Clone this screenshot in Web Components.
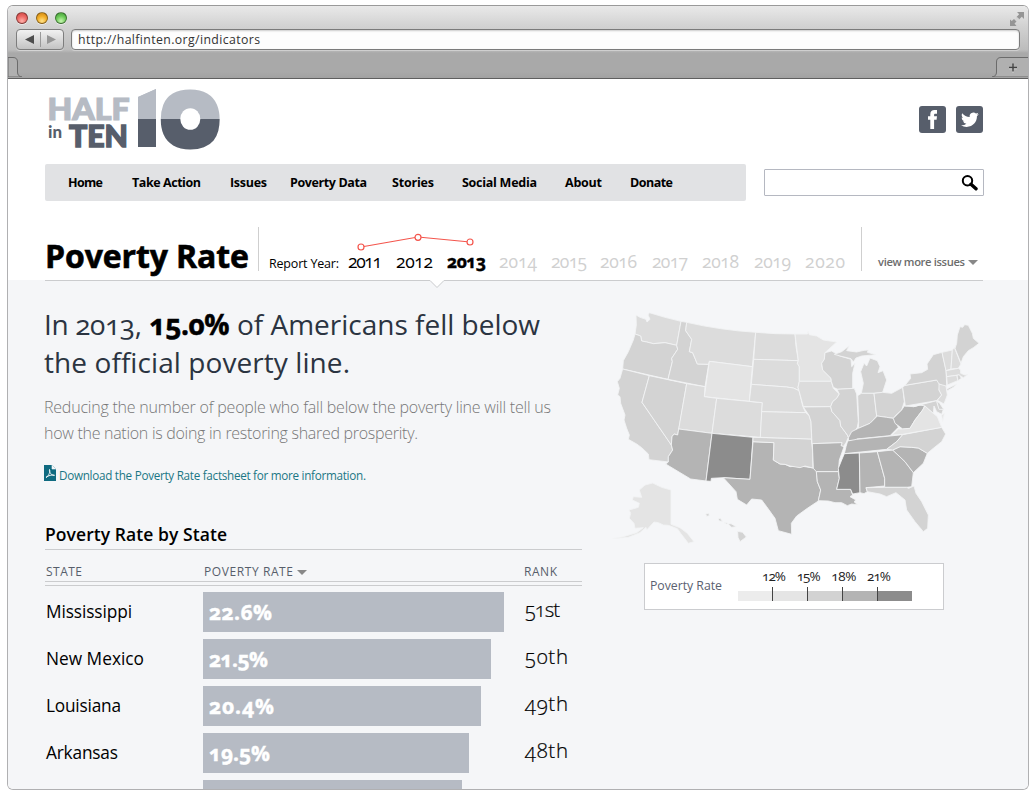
<!DOCTYPE html>
<html lang="en">
<head>
<meta charset="utf-8">
<title>Half in Ten – Indicators</title>
<style>
html,body{margin:0;height:790px;overflow:hidden;background:#fff}
body{font-family:"Open Sans","Noto Sans",sans-serif;color:#000}
</style>
</head>
<body>
<browser-window>
  <site-header></site-header>
  <site-nav></site-nav>
  <issue-bar></issue-bar>
  <issue-report></issue-report>
</browser-window>

<script>
const pending = [];
class Shadowed extends HTMLElement {
  constructor() {
    super();
    const t = document.createElement('template');
    t.innerHTML = this.constructor.markup;
    this.attachShadow({mode: 'open'}).append(t.content.cloneNode(true));
  }
}
const define = (name, markup) =>
  customElements.define(name, class extends Shadowed { static get markup() { return markup; } });

/* A single line of text tracked to a fixed measure (attribute w, in px). */
customElements.define('fit-text', class extends Shadowed {
  static get markup() { return '<style>:host{display:block;white-space:pre;flex:none}span{display:inline-block}</style><span><slot></slot></span>'; }
  connectedCallback() { pending.push(this); }
  fit() {
    const w = +this.getAttribute('w'), s = this.shadowRoot.querySelector('span');
    if (!w) return;
    const natural = s.getBoundingClientRect().width, n = this.textContent.length - 1;
    s.style.letterSpacing = ((w - natural) / n) + 'px';
    this.style.width = w + 'px';
  }
});

define('browser-window', `<style>
:host{display:block;box-sizing:border-box;width:1022px;height:785px;margin:5px 0 0 7px;border:1px solid #b0b0b2;border-top-color:#9a9a9a;border-radius:6px;overflow:hidden;background:#fff}
.chrome{height:73px;box-sizing:border-box;border-bottom:1px solid #5f5f5f;background:linear-gradient(#e9e9e9 0,#d2d2d2 20px,#bcbcbc 44px,#a9a9a9 47px,#a9a9a9 66px,#a2a2a2 72px);display:flex;flex-direction:column}
.lights{height:23px;display:flex;align-items:center;padding:0 5px 0 8px}
.lights i{width:10px;height:10px;border-radius:50%;border:1px solid #0006;margin-right:7.5px;box-shadow:0 1px 0 #fff8}
.r{background:radial-gradient(circle at 50% 80%,#ffb1ab,#ed6a66 50%,#c94340)}
.y{background:radial-gradient(circle at 50% 80%,#ffe38a,#f2ae28 50%,#c98211)}
.g{background:radial-gradient(circle at 50% 80%,#c8f7b1,#6ecb5a 50%,#3f9534)}
.lights svg{margin-left:auto;margin-right:-2px}
.bar{display:flex;height:21px;gap:7px;padding:0 8px 0 8px}
.btn{width:48px;box-sizing:border-box;border:1px solid #7d7d7d;border-radius:4px;background:linear-gradient(#f2f2f2,#c3c3c3);box-shadow:0 1px 0 #d5d5d5}
.url{flex:1;box-sizing:border-box;border:1px solid #7b7b7b;border-radius:4px;background:#fdfdfd;box-shadow:inset 0 1px 2px #0003,0 1px 0 #cfcfcf;padding-left:6px;font-size:12.300px;line-height:19px;color:#333}
.tabs{display:flex;justify-content:space-between;height:20px;margin-top:7px}
</style>
<div class="chrome">
 <div class="lights"><i class="r"></i><i class="y"></i><i class="g"></i>
  <svg width="16" height="16" viewBox="0 0 16 16"><path d="M8 2h7v7l-2.200-2.200L10 9.500 7.500 7l2.700-2.800zM1 9.500l1.800 1.500L5 9l2.500 2.500L5.500 13.500 7.500 16H1z" fill="#959595"/><path d="M5 12.500l6-6.500" stroke="#d4d4d4" stroke-width="3" stroke-dasharray="0 3 3 9"/></svg></div>
 <div class="bar"><div class="btn"><svg width="46" height="19" viewBox="0 0 46 19"><path d="M8 9.500l9-4.500v9z" fill="#4d4d4d"/><path d="M23.500 2v15" stroke="#999"/><path d="M39 9.500l-9-4.500v9z" fill="#969696"/></svg></div>
 <div class="url"><fit-text w="182">http://halfinten.org/indicators</fit-text></div></div>
 <div class="tabs">
  <svg width="16" height="20" viewBox="0 0 16 20"><path d="M0 .5H5Q9.500 .5 9.500 5V15Q9.500 19.500 14 20H0z" fill="#b0b0b0" stroke="#6b6b6b"/></svg>
  <svg width="36" height="20" viewBox="0 0 36 20"><path d="M37 .5H9Q4.500 .5 4.500 5V15Q4.500 19.500 0 20H37z" fill="#b0b0b0" stroke="#6b6b6b"/><path d="M17 11.500h8M21 7.500v8" stroke="#d8d8d8" stroke-width="1.500"/><path d="M17 10.500h8M21 6.500v8" stroke="#444" stroke-width="1.500"/></svg></div>
</div>
<slot></slot>`);

define('half-in-ten-logo', `<style>:host{display:block}svg{display:block;overflow:visible}text{font-family:Lato,"Open Sans",sans-serif;font-weight:900}</style>
<svg width="176" height="64" viewBox="0 0 176 64">
 <defs><linearGradient id="two" gradientUnits="userSpaceOnUse" x1="0" y1="0" x2="0" y2="64"><stop offset=".5" stop-color="#b6bbc4"/><stop offset=".5" stop-color="#575e6b"/></linearGradient>
 <clipPath id="one"><path d="M93 10L111 2V60H93z"/></clipPath></defs>
 <text x="2.500" y="32.500" font-size="29.500" textLength="82" lengthAdjust="spacingAndGlyphs" fill="#b6bbc4" stroke="#b6bbc4" stroke-width="1.200">HALF</text>
 <text x="3" y="51" font-size="16.500" textLength="14" lengthAdjust="spacingAndGlyphs" fill="#575e6b">in</text>
 <text x="24" y="59.500" font-size="29.500" textLength="59" lengthAdjust="spacingAndGlyphs" fill="#575e6b" stroke="#575e6b" stroke-width="1.400">TEN</text>
 <g clip-path="url(#one)"><text x="78" y="60" style="font-family:'Open Sans';font-weight:800" font-size="81" fill="url(#two)" stroke="url(#two)" stroke-width="14">1</text></g>
 <text transform="translate(120.400 0) scale(1.150 1)" x="0" y="55.500" textLength="43" lengthAdjust="spacingAndGlyphs" style="font-family:'Open Sans';font-weight:800" font-size="66" fill="url(#two)" stroke="url(#two)" stroke-width="12" stroke-linejoin="round">0</text>
 <ellipse cx="145.300" cy="32" rx="10" ry="10.800" fill="#fff"/>
</svg>`);

define('site-header', `<style>
:host{display:flex;justify-content:space-between;height:85px;box-sizing:border-box;padding:8px 45px 0 37px}
.social{display:flex;gap:10px;padding-top:19px}.social svg{display:block}
</style><half-in-ten-logo></half-in-ten-logo>
<div class="social">
<svg width="27" height="27" viewBox="0 0 27 27"><rect width="27" height="27" rx="3" fill="#575e6b"/><path d="M11.300 23V13.800H9V10.200h2.300V8.200C11.300 5.300 13 4 15.500 4H18v3.700h-1.600c-1 0-1.300.4-1.300 1.200v1.300H18l-.4 3.600h-2.500V23z" fill="#fff"/></svg>
<svg width="27" height="27" viewBox="0 0 27 27"><rect width="27" height="27" rx="3" fill="#575e6b"/><path transform="translate(5 4.800) scale(.74)" d="M23.950 4.570a10 10 0 01-2.820.77 4.960 4.960 0 002.160-2.720c-.95.550-2 .95-3.120 1.180a4.920 4.920 0 00-8.380 4.480C7.690 8.100 4.070 6.130 1.640 3.160a4.820 4.820 0 00-.67 2.480c0 1.710.87 3.210 2.190 4.100a4.900 4.900 0 01-2.230-.62v.060a4.920 4.920 0 003.950 4.830 5 5 0 01-2.210.080 4.940 4.940 0 004.600 3.420A9.870 9.870 0 010 19.540a14 14 0 007.550 2.210c9.050 0 14-7.500 14-13.980 0-.21 0-.420-.020-.63a9.940 9.940 0 002.460-2.550z" fill="#fff"/></svg>
</div>`);

define('site-nav', `<style>
:host{display:flex;gap:18px;margin-left:37px;align-items:center;height:37px}
nav{box-sizing:border-box;width:701px;height:37px;background:#e1e2e4;border-radius:2px;display:flex;padding-left:23px;font-size:12.500px;font-weight:700;line-height:37px}
.search{box-sizing:border-box;width:220px;height:27px;border:1px solid #b5b8c1;border-radius:1px;display:flex;justify-content:flex-end;padding:4px 5px}
</style><nav><fit-text w="35">Home</fit-text><fit-text w="69" style="margin-left:29px">Take Action</fit-text><fit-text w="37" style="margin-left:29px">Issues</fit-text><fit-text w="77" style="margin-left:23px">Poverty Data</fit-text><fit-text w="42" style="margin-left:25px">Stories</fit-text><fit-text w="75" style="margin-left:28px">Social Media</fit-text><fit-text w="37" style="margin-left:28px">About</fit-text><fit-text w="43" style="margin-left:28px">Donate</fit-text></nav>
<div class="search"><svg width="17" height="17" viewBox="0 0 17 17"><circle cx="6.500" cy="6.700" r="4.700" fill="none" stroke="#000" stroke-width="2"/><path d="M10 10.200l5 4.600" stroke="#000" stroke-width="3.400" stroke-linecap="round"/></svg></div>`);

define('year-trend', `<style>:host{display:block}svg{display:block}</style>
<svg width="130" height="20" viewBox="0 0 130 20" fill="#fff" stroke="#f4554c" stroke-width="1.200"><path d="M15 15L72 5L124 10" fill="none"/><circle cx="15" cy="15" r="3"/><circle cx="72" cy="5.300" r="3"/><circle cx="124" cy="10" r="3"/></svg>`);

define('issue-bar', `<style>
:host{display:flex;height:79px;margin:0 45px 0 37px}
h1{margin:35px 0 0;font-size:32px;line-height:40px;font-weight:700;width:213px;-webkit-text-stroke:.6px #000}
.mid{box-sizing:border-box;width:604px;height:44px;margin-top:26px;border:solid #cfcfcf;border-width:0 1px;padding-left:10px}
year-trend{height:20px;margin:5px 0 0 77px}
.years{display:flex;line-height:24px;margin-top:-3px;color:#d0d0d0;font-size:17.500px;font-variant-numeric:oldstyle-nums}
.label{font-size:12.500px;line-height:29px;color:#000;margin-right:9px}
.on{color:#000}.now{color:#000;font-weight:700;-webkit-text-stroke:.4px #000}
.more{display:flex;gap:3px;margin:51px 0 0 16px;height:20px;line-height:20px;font-size:11.200px;font-weight:600;color:#6c6c6c}
i{border:5px solid transparent;border-top:5px solid #888;border-bottom:0;height:0;margin-top:8px}
</style><h1><fit-text w="204">Poverty Rate</fit-text></h1>
<div class="mid"><year-trend></year-trend><div class="years"><fit-text class="label" w="70">Report Year:</fit-text><fit-text class="on" w="34">2011</fit-text><fit-text class="on" w="37" style="margin-left:14px">2012</fit-text><fit-text class="now" w="39" style="margin-left:14px">2013</fit-text><fit-text w="38" style="margin-left:13px">2014</fit-text><fit-text w="36" style="margin-left:14px">2015</fit-text><fit-text w="37" style="margin-left:13px">2016</fit-text><fit-text w="36" style="margin-left:15px">2017</fit-text><fit-text w="37" style="margin-left:14px">2018</fit-text><fit-text w="37" style="margin-left:15px">2019</fit-text><fit-text w="40" style="margin-left:14px">2020</fit-text></div></div>
<div class="more"><fit-text w="87">view more issues</fit-text><i></i></div>`);

define('us-map', `<style>:host{display:block}svg{display:block}path{stroke:#f2f3f4;stroke-width:2.600;stroke-linejoin:round}.a{fill:#e4e4e4}.b{fill:#dcdcdc}.c{fill:#d3d3d3}.d{fill:#b4b4b4}.e{fill:#8c8c8c}</style>
<svg width="400" height="250" viewBox="0 0 1200 750">
<path class="b" d="M108 45L120 52 138 58 141 66 150 58 144 45 148 38 195 52 243 64 230 136 195 128 160 131 140 126 125 123 122 108 105 102 109 75z"/>
<path class="c" d="M105 102L122 108 125 123 140 126 160 131 195 128 230 136 233 148 215 175 217 185 204 238 68 207 70 182 85 155 100 120z"/>
<path class="c" d="M68 207L148 227 126 307 214 435 218 450 205 470 205 486 147 479 145 462 125 443 110 432 85 418 88 405 80 385 72 360 75 345 62 310 60 290 53 285 58 265 52 245 60 235z"/>
<path class="c" d="M148 227L260 251 237 385 233 405 222 402 216 410 214 435 126 307z"/>
<path class="c" d="M243 64L260 67 257 92 275 118 268 155 278 158 292 192 326 193 315 260 204 238 217 185 215 175 233 148 230 136z"/>
<path class="b" d="M260 67Q360 90 467 97L457 200 328 184 326 193 292 192 278 158 268 155 275 118 257 92z"/>
<path class="a" d="M328 184L457 200 448 304 313 290z"/>
<path class="b" d="M260 251L315 260 313 290 350 295 336 400 236 387z"/>
<path class="b" d="M350 295L487 308 481 412 336 400z"/>
<path class="d" d="M236 387L336 400 318 543 272 537 197 492 205 486 205 470 218 450 214 435 216 410 222 402 233 405z"/>
<path class="e" d="M336 400L459 412 450 538 370 533 334 535 333 544 318 543z"/>
<path class="d" d="M459 425L522 428 520 480 540 492 555 493 570 500 600 498 615 500 640 504 649 513 652 545 662 570 655 603 622 625 590 648 574 670 575 703 535 692 525 655 500 620 485 600 455 597 440 615 412 598 408 575 370 533 450 538z"/>
<path class="c" d="M459 412L634 417 638 455 639 504 615 498 600 503 570 498 555 493 540 492 520 480 522 428 459 425z"/>
<g transform="translate(420)">
<path class="b" d="M47 97L105 101 165 102 168 140 175 182 41 178z"/>
<path class="b" d="M41 178L175 182 172 190 178 200V245L174 262 177 272 160 264 140 261 34 253z"/>
<path class="b" d="M34 253L140 261 160 264 177 272 188 318 197 338 65 335 67 308 28 304z"/>
<path class="b" d="M65 335L197 338 207 346 213 365 215 417 61 412z"/>
<path class="a" d="M165 102L203 102 204 94 208 104 230 108 250 120 290 126 255 158 253 178 245 190 248 210 273 235 274 244H178V200L172 190 175 182z"/>
<path class="b" d="M178 244H274L280 265 298 282 290 295 278 305 272 320H190L177 272 174 262z"/>
<path class="c" d="M190 321L272 320 276 335 300 362 302 378 322 405 325 412 318 428 310 440 303 437 306 428 216 431 213 365 207 346z"/>
<path class="d" d="M217 431L306 428 303 437 312 440 298 480 295 515H229L220 505z"/>
<path class="d" d="M229 515H295L298 535 290 568H332L338 585 330 590 348 600 342 605 352 614 335 612 322 617 305 608 285 608 265 603 235 602 242 570 232 545z"/>
<path class="c" d="M255 158L275 153 300 168 333 178 335 200 345 190 338 220V265L293 268 280 262 274 244 273 235 248 210 245 190 253 178z"/>
<path class="c" d="M291 268L343 265 350 282 355 365 352 382 340 400 325 412 322 405 302 378 300 362 276 335 272 320 278 305 290 295 298 282z"/>
</g>
<g transform="translate(570)">
<path class="c" d="M133 163L155 155 178 137 170 152 200 156 222 151 235 150 232 157 258 164 215 168 198 174 190 186 183 176 150 168z"/>
<path class="c" d="M214 280L220 250 212 215 222 190 230 198 240 174 262 182 270 200 264 218 279 212 290 240 278 277 252 280z"/>
<path class="c" d="M203 287L214 280 252 280 260 348 240 370 205 385 206 365z"/>
<path class="c" d="M252 280L278 277 305 280 338 262 343 305 335 330 318 345 310 355 290 352 275 350 260 348z"/>
<path class="d" d="M176 412L185 395 205 385 240 370 262 348 290 352 310 355 325 382 300 407 200 417 195 422 175 422z"/>
<path class="d" d="M173 423L200 418 300 408 338 404 320 425 290 448 163 461 168 440z"/>
<path class="e" d="M163 461L208 459 210 578 188 582 182 568H140L148 535 145 505 155 480z"/>
<path class="d" d="M208 459L262 455 284 535 284 558 228 563 232 575 222 581 210 578z"/>
<path class="d" d="M262 455L308 450 345 485 370 518 365 560 350 562 284 562V535z"/>
<path class="d" d="M308 450L330 440 365 442 385 444 412 460 400 490 370 518 345 485z"/>
<path class="c" d="M338 404L455 382 467 402 455 425 430 445 412 460 385 444 365 442 330 440 308 450 290 448 320 425z"/>
<path class="d" d="M343 318L370 320 390 315 405 315 398 330 375 360 360 385 338 387 315 370 310 355 335 330z"/>
<path class="a" d="M306 405L325 387 338 387 360 385 375 360 398 330 405 318 430 340 442 350 455 382 338 403z"/>
<path class="c" d="M228 563L284 562 350 562 356 565 372 558 378 580 395 605 415 645 413 685 400 695 375 665 350 630 345 600 318 578 290 590 270 582 232 575z"/>
<path class="c" d="M338 262L345 256 440 240 450 250 447 270 455 285 440 302 346 318z"/>
<path class="c" d="M345 256L362 235 360 222 395 218 413 208 411 192 430 164 456 157 468 210 470 255 466 261 447 252 440 240z"/>
<path class="b" d="M447 252L468 258 472 285 462 312 442 301 455 285 447 270z"/>
<path class="c" d="M370 320L440 302 447 325 460 328 455 343 440 335 432 318 430 340 405 318 390 315z"/>
<path class="c" d="M440 304L448 308 461 328 447 328z"/>
<path class="b" d="M456 157L487 150 483 207 468 212z"/>
<path class="b" d="M487 150L493 142 513 192 505 205 483 207z"/>
<path class="c" d="M495 145L500 130 502 105 510 80 518 82 524 74 535 76 547 100 550 115 567 130 550 143 535 152 520 170 513 190z"/>
<path class="b" d="M468 212L505 205 512 210 512 220 525 225 535 223 520 233 505 225 470 230z"/>
<path class="b" d="M470 230L501 226 503 242 472 255z"/><path class="c" d="M501 226L508 224 514 235 504 242z"/>
<path class="c" d="M470 267L500 252 490 262 472 272z"/>
<path class="a" d="M455 345L463 340 458 365z"/>
</g>
<path class="a" d="M118 570L135 555 158 549 185 562 213 570V673L240 683 262 700 282 725 265 730 242 700 232 686 205 676 190 675 175 668 162 666 140 690 138 682 120 698 85 712 38 716 70 710 110 698 130 683 105 685 102 670 88 655 92 640 87 630 115 622 118 610 97 600 100 590 125 592z"/>
<path class="c" d="M317 642L326 640 328 647 320 649zM354 656L361 655 367 664 358 663zM372 668L384 669 380 672zM384 672L393 671 409 680 395 682zM413 694L428 697 439 711 420 725 414 712z"/>
</svg>`);

define('map-legend', `<style>
:host{box-sizing:border-box;width:300px;height:47px;border:1px solid #cbcccf;background:#fff;display:flex;font-variant-numeric:oldstyle-nums}
.name{font-size:12.300px;color:#5a6170;line-height:20px;margin:12px 0 0 5px}
.scale{margin:2px 0 0 16px;width:174px}
.nums{display:flex;justify-content:space-between;margin:0 21px 0 24px;font-size:13.500px;line-height:20px;color:#222}
.bar{display:grid;grid-template-columns:34px 1px 34px 1px 34px 1px 34px 1px 34px;align-items:end;margin-top:1px}
.bar i{height:10px}.bar b{height:14px;background:#444}
</style><fit-text class="name" w="72">Poverty Rate</fit-text>
<div class="scale"><div class="nums"><fit-text w="24">12%</fit-text><fit-text w="24">15%</fit-text><fit-text w="25">18%</fit-text><fit-text w="24">21%</fit-text></div>
<div class="bar"><i style="background:#ececec"></i><b></b><i style="background:#e5e5e5"></i><b></b><i style="background:#d2d2d2"></i><b></b><i style="background:#b4b4b4"></i><b></b><i style="background:#8c8c8c"></i></div></div>`);

customElements.define('state-row', class extends Shadowed {
  static get markup() { return `<style>
:host{display:grid;grid-template-columns:158px 321px 1fr;height:40px;margin-bottom:7px;font-variant-numeric:oldstyle-nums}
.s{font-size:17.300px;line-height:39px;padding-left:1px}
.bar{background:#b6bbc4;color:#fff;font-weight:700;font-size:21px;line-height:40px;box-sizing:border-box;height:40px;padding-left:6px;-webkit-text-stroke:.4px #fff}
.r{font-size:20.500px;line-height:34px;padding-left:1px;font-weight:300;-webkit-text-stroke:.2px #000}
</style><div class="s"></div><div><div class="bar"></div></div><div class="r"></div>`; }
  connectedCallback() {
    const q = c => this.shadowRoot.querySelector(c);
    q('.bar').style.width = this.getAttribute('bar') + 'px';
    for (const [cls, key] of [['.s', 'state'], ['.bar', 'rate'], ['.r', 'rank']]) {
      const v = this.getAttribute(key);
      if (!v) continue;
      const [text, w] = v.split('|'), f = document.createElement('fit-text');
      f.setAttribute('w', w); f.textContent = text; q(cls).append(f);
    }
  }
});

define('state-table', `<style>
:host{display:block;width:537px;margin:41px 0 0 1px}
h2{margin:0;height:23px;line-height:23px;padding-bottom:3px;font-size:17.500px;font-weight:600;border-bottom:1px solid #cbccce}
.head{display:grid;grid-template-columns:158px 320px 1fr;font-size:12px;color:#575e6b;height:31px;line-height:43px;border-bottom:1px solid #cbccce}
.head>*{padding-left:1px;display:flex;gap:4px}
.rule{height:3px;border-bottom:1px solid #cbccce;margin-bottom:6px}
i{border:5px solid transparent;border-top:5px solid #888;border-bottom:0;height:0;margin-top:20px}
</style><h2><fit-text w="182">Poverty Rate by State</fit-text></h2>
<div class="head"><div><fit-text w="36">STATE</fit-text></div><div><fit-text w="89">POVERTY RATE</fit-text><i></i></div><div><fit-text w="33">RANK</fit-text></div></div><div class="rule"></div>
<state-row state="Mississippi|86" rate="22.6%|63" rank="51st|35" bar="301"></state-row>
<state-row state="New Mexico|98" rate="21.5%|59" rank="50th|43" bar="288"></state-row>
<state-row state="Louisiana|75" rate="20.4%|65" rank="49th|43" bar="278"></state-row>
<state-row state="Arkansas|72" rate="19.5%|61" rank="48th|43" bar="266"></state-row>
<state-row bar="259"></state-row>`);

define('issue-report', `<style>
:host{display:block;background:#f5f6f8;height:510px}
.notch{display:block;margin-left:37px;height:8px}
.cols{display:grid;grid-template-columns:592px 1fr;padding-left:36px;margin-top:17px}
.l{display:flex;gap:7.500px}
.big{font-size:28px;line-height:38px;color:#2b3441;font-variant-numeric:oldstyle-nums}
.big b{font-weight:700;color:#000;-webkit-text-stroke:.5px #000}
.sub{font-size:16px;line-height:26px;font-weight:300;color:#777;margin-top:13px}
.dl{display:flex;gap:3px;font-size:11.700px;line-height:20px;height:17px;color:#1b7685;margin-top:19px}
us-map{margin:-5px 0 0 -36px}map-legend{margin:13px 0 0 8px}
</style>
<svg class="notch" width="938" height="8" viewBox="0 0 938 8"><path d="M385 0H399L392 7z" fill="#fff"/><path d="M0 .5H385L392 7.500 399 .5H938" fill="none" stroke="#cbccce"/></svg>
<div class="cols"><div>
<div class="big"><div class="l"><fit-text w="98">In 2013,</fit-text><b><fit-text w="80">15.0%</fit-text></b><fit-text w="303">of Americans fell below</fit-text></div><fit-text w="306">the official poverty line.</fit-text></div>
<div class="sub"><fit-text w="507">Reducing the number of people who fall below the poverty line will tell us</fit-text><fit-text w="374">how the nation is doing in restoring shared prosperity.</fit-text></div>
<div class="dl"><svg width="12" height="16" viewBox="0 0 12 16"><path d="M0 0H8L12 4V16H0z" fill="#0f6a80"/><path d="M8 0V4H12" fill="#f5f6f8" stroke="#f5f6f8" stroke-width=".6"/><path d="M2 12.500C5 10.500 6.500 6.500 5.500 4.500 5 7.500 7.500 10.500 10.500 10.300 7.500 9.500 4.500 10.500 2 12.500z" fill="none" stroke="#fff" stroke-width=".9"/></svg><fit-text w="307">Download the Poverty Rate factsheet for more information.</fit-text></div>
<state-table></state-table></div>
<div><us-map></us-map><map-legend></map-legend></div></div>`);

pending.forEach(e => e.fit());
</script>
</body>
</html>
